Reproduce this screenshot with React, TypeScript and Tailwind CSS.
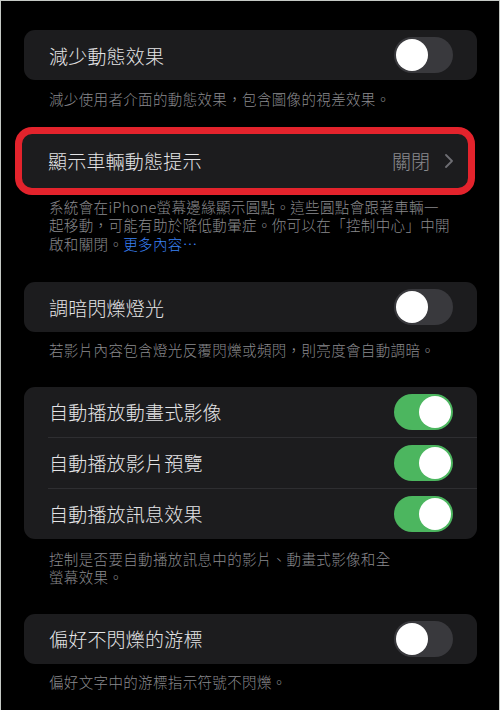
import React from 'react'

const font = { fontFamily: '"Noto Sans CJK TC", "Noto Sans", sans-serif' }

function Toggle({ on }: { on: boolean }) {
  return (
    <div
      className={`relative w-[59px] h-[36px] rounded-full shrink-0 ${on ? 'bg-[#4cb65f]' : 'bg-[#39393d]'}`}
    >
      <div
        className={`absolute top-[2px] w-[32px] h-[32px] rounded-full bg-white ${on ? 'right-[2px]' : 'left-[2px]'}`}
      />
    </div>
  )
}

function Row({ title, on }: { title: string; on: boolean }) {
  return (
    <div className="h-[50px] flex items-center justify-between pl-[25px] pr-[24px]">
      <span className="text-[19px] font-light tracking-[0.2px] text-[#e4e4e6] leading-none">{title}</span>
      <Toggle on={on} />
    </div>
  )
}

function Desc({ lines, className = '' }: { lines: React.ReactNode[]; className?: string }) {
  return (
    <div className={`pl-[25px] text-[14.5px] font-light tracking-[0.35px] leading-[18.5px] text-[#8a8a8e] whitespace-nowrap ${className}`}>
      {lines.map((l, i) => (
        <div key={i}>{l}</div>
      ))}
    </div>
  )
}

export default function App() {
  return (
    <div
      className="w-[500px] h-[710px] bg-black overflow-hidden border-x border-t border-[#c5c9c5] pl-[23px] pr-[22px] pt-[29px]"
      style={font}
    >
      {/* 減少動態效果 */}
      <div className="rounded-[11px] bg-[#1c1c1e]">
        <Row title="減少動態效果" on={false} />
      </div>
      <Desc className="mt-[10px]" lines={['減少使用者介面的動態效果，包含圖像的視差效果。']} />

      {/* 顯示車輛動態提示 (highlighted) */}
      <div className="mt-[18px] ml-[-9px] mr-[2px] h-[68px] rounded-[17px] border-[7px] border-[#e3232c] bg-[#1c1c1e] flex items-center justify-between pl-[26px] pr-[15px]">
        <span className="text-[19px] font-light tracking-[0.2px] text-[#e4e4e6] leading-none">顯示車輛動態提示</span>
        <div className="flex items-center gap-[15px]">
          <span className="text-[19px] font-light text-[#8a8a8e] leading-none">關閉</span>
          <svg width="8" height="14" viewBox="0 0 8 14" fill="none">
            <path d="M1 1l6 6-6 6" stroke="#6e6e73" strokeWidth="1.8" strokeLinecap="round" strokeLinejoin="round" />
          </svg>
        </div>
      </div>
      <Desc
        className="mt-[3px]"
        lines={[
          '系統會在iPhone螢幕邊緣顯示圓點。這些圓點會跟著車輛一',
          '起移動，可能有助於降低動暈症。你可以在「控制中心」中開',
          <>
            啟和關閉。<span className="text-[#3b82f6]">更多內容⋯</span>
          </>,
        ]}
      />

      {/* 調暗閃爍燈光 */}
      <div className="mt-[29px] rounded-[11px] bg-[#1c1c1e]">
        <Row title="調暗閃爍燈光" on={false} />
      </div>
      <Desc className="mt-[9px]" lines={['若影片內容包含燈光反覆閃爍或頻閃，則亮度會自動調暗。']} />

      {/* 自動播放 group */}
      <div className="mt-[27px] rounded-[11px] bg-[#1c1c1e] overflow-hidden">
        <Row title="自動播放動畫式影像" on={true} />
        <div className="ml-[24px] h-px bg-[#2e2e31]" />
        <Row title="自動播放影片預覽" on={true} />
        <div className="ml-[24px] h-px bg-[#2e2e31]" />
        <Row title="自動播放訊息效果" on={true} />
      </div>
      <Desc
        className="mt-[11px]"
        lines={['控制是否要自動播放訊息中的影片、動畫式影像和全', '螢幕效果。']}
      />

      {/* 偏好不閃爍的游標 */}
      <div className="mt-[27px] rounded-[11px] bg-[#1c1c1e]">
        <Row title="偏好不閃爍的游標" on={false} />
      </div>
      <Desc className="mt-[9px]" lines={['偏好文字中的游標指示符號不閃爍。']} />
    </div>
  )
}
